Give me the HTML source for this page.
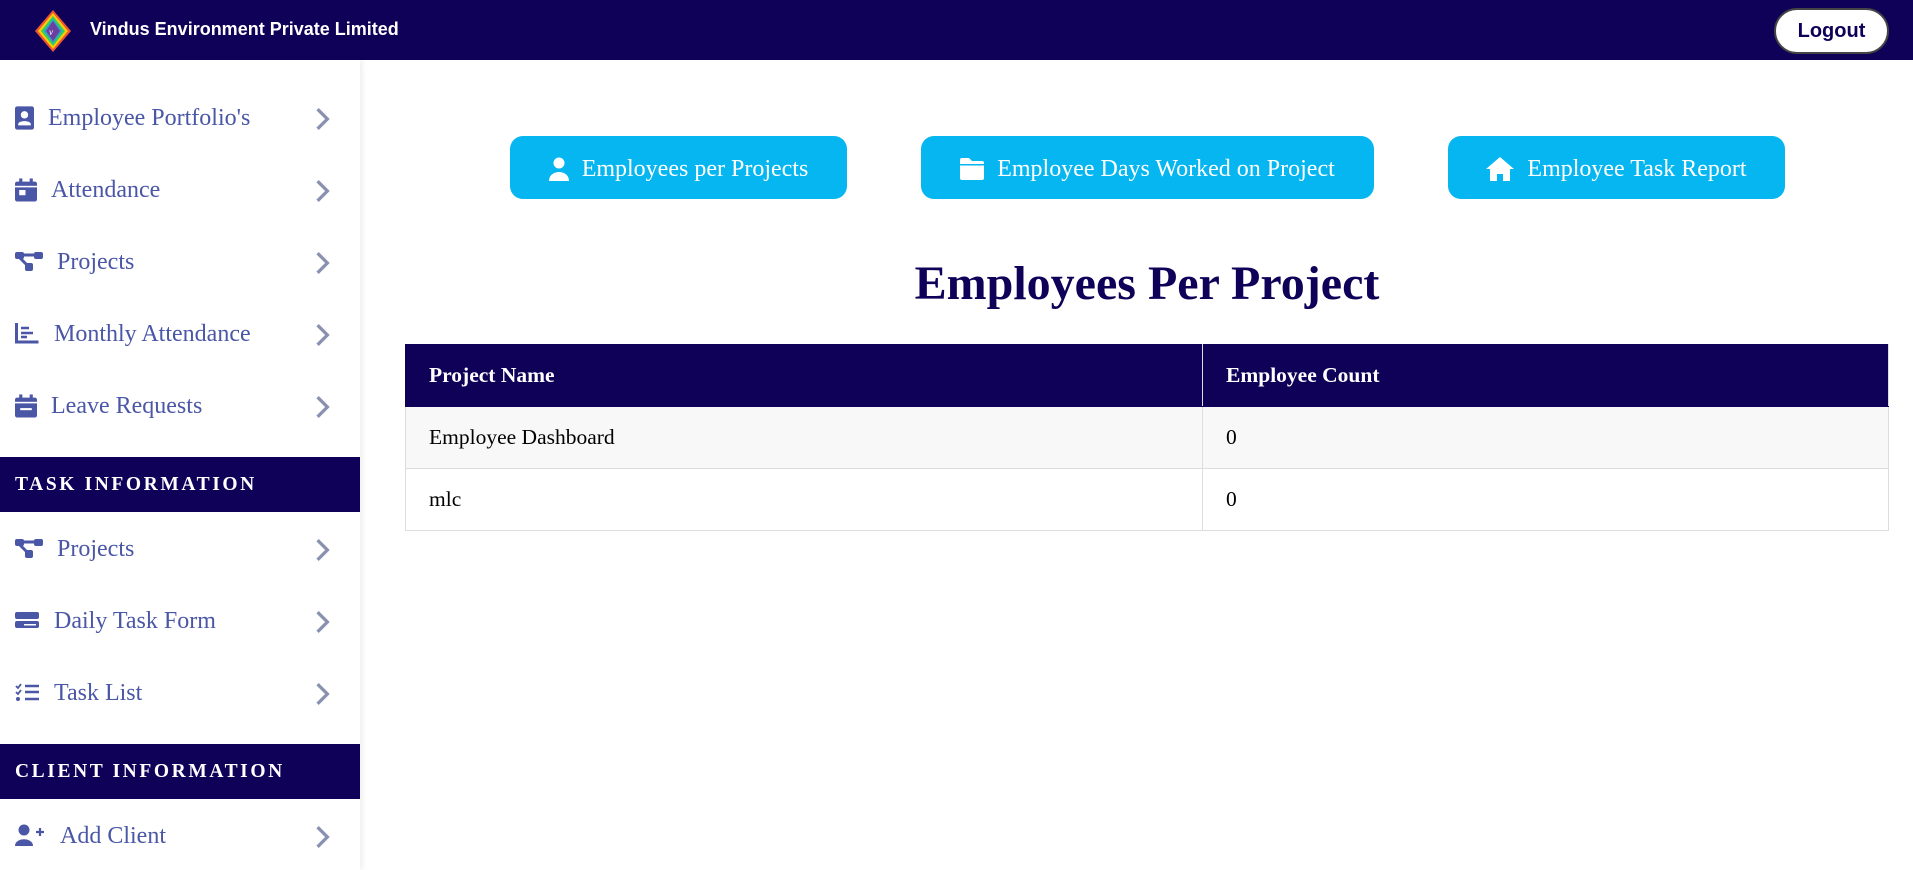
<!DOCTYPE html>
<html><head><meta charset="utf-8"><style>
*{margin:0;padding:0;box-sizing:border-box}
body{width:1913px;height:870px;overflow:hidden;background:#fff;font-family:"Liberation Serif",serif;position:relative}
.hdr{position:absolute;left:0;top:0;width:1913px;height:60px;background:#0f0058}
.brand{position:absolute;left:90px;top:19px;color:#fff;font:bold 18px "Liberation Sans",sans-serif}
.logout{position:absolute;left:1774px;top:8px;width:115px;height:46px;border-radius:23px;background:#fff;border:2px solid #444;color:#0f0058;font:bold 20px "Liberation Sans",sans-serif;text-align:center;line-height:42px}
.side{position:absolute;left:0;top:60px;width:360px;height:810px;background:#fff;box-shadow:2px 0 6px rgba(0,0,0,.08)}
.item{position:absolute;left:0;width:360px;height:40px;color:#4a56a6;font-size:24px}
.item svg.ic{position:absolute;left:15px;top:8px}
.item span{position:absolute;top:7px}
.item .chev{position:absolute;left:315px;top:9px}
.sec{position:absolute;left:0;width:360px;height:55px;background:#0f0058;color:#fff;font-weight:bold;font-size:19.5px;letter-spacing:2.6px;padding-left:15px;line-height:55px}
.btn{position:absolute;top:136px;height:63px;padding-top:3px;background:#06b6f0;border-radius:13px;color:#fff;font-size:24px;display:flex;align-items:center;justify-content:center;gap:13px}
h1{position:absolute;left:405px;width:1484px;top:256px;text-align:center;color:#0f0058;font-size:48px;font-weight:bold}
table{position:absolute;left:405px;top:344px;width:1484px;border-collapse:collapse;font-size:21.5px}
td,th{border:1px solid #ddd;text-align:left;padding-left:23px;height:62px}
th{background:#0f0058;color:#fff;border-color:#0f0058;border-right-color:#ddd}
tr.a td{background:#f8f8f8}
</style></head><body>
<div class="hdr">
<svg style="position:absolute;left:34px;top:9px" width="38" height="44" viewBox="0 0 38 44">
<polygon points="19,1 37,22 19,43 1,22" fill="#e53"/>
<polygon points="19,4 34,22 19,40 4,22" fill="#fc0"/>
<polygon points="19,7 31,22 19,37 7,22" fill="#3c6"/>
<polygon points="19,10 28,22 19,34 10,22" fill="#39c"/>
<polygon points="19,12 26,22 19,32 12,22" fill="#6a3fa0"/>
<text x="15" y="26" font-size="9" fill="#fff" font-style="italic">v</text>
</svg>
<div class="brand">Vindus Environment Private Limited</div>
<div class="logout">Logout</div>
</div>
<div class="side">
<div class="item" style="top:38px"><svg class="ic" width="19" height="24" viewBox="0 0 18 22"><rect x="0" y="0" width="18" height="22" rx="2" fill="#4a56a6"/><circle cx="9" cy="8" r="3.5" fill="#fff"/><path d="M3 17c0-4 12-4 12 0v1H3z" fill="#fff"/></svg><span style="left:48px">Employee Portfolio's</span><svg class="chev" width="16" height="24" viewBox="0 0 14 22"><path d="M2 2l9 9-9 9" stroke="#8a90b0" stroke-width="3" fill="none"/></svg></div>
<div class="item" style="top:110px"><svg class="ic" width="22" height="24" viewBox="0 0 21 22"><rect x="4" y="0" width="3" height="5" fill="#4a56a6"/><rect x="14" y="0" width="3" height="5" fill="#4a56a6"/><rect x="0" y="3" width="21" height="19" rx="2" fill="#4a56a6"/><rect x="0" y="7" width="21" height="1.5" fill="#fff"/><rect x="4" y="11" width="6" height="5" fill="#fff"/></svg><span style="left:51px">Attendance</span><svg class="chev" width="16" height="24" viewBox="0 0 14 22"><path d="M2 2l9 9-9 9" stroke="#8a90b0" stroke-width="3" fill="none"/></svg></div>
<div class="item" style="top:182px"><svg class="ic" width="28" height="22" viewBox="0 0 28 22"><rect x="0" y="2" width="9" height="7" rx="2" fill="#4a56a6"/><rect x="19" y="2" width="9" height="7" rx="2" fill="#4a56a6"/><rect x="10" y="13" width="8" height="8" rx="2" fill="#4a56a6"/><path d="M8 5h12M5 8l9 9" stroke="#4a56a6" stroke-width="3"/></svg><span style="left:57px">Projects</span><svg class="chev" width="16" height="24" viewBox="0 0 14 22"><path d="M2 2l9 9-9 9" stroke="#8a90b0" stroke-width="3" fill="none"/></svg></div>
<div class="item" style="top:254px"><svg class="ic" width="24" height="22" viewBox="0 0 24 22"><path d="M1.5 1v19h22" stroke="#4a56a6" stroke-width="3" fill="none"/><path d="M6 6h8M6 11h12M6 15h6" stroke="#4a56a6" stroke-width="2.5"/></svg><span style="left:54px">Monthly Attendance</span><svg class="chev" width="16" height="24" viewBox="0 0 14 22"><path d="M2 2l9 9-9 9" stroke="#8a90b0" stroke-width="3" fill="none"/></svg></div>
<div class="item" style="top:326px"><svg class="ic" width="22" height="24" viewBox="0 0 21 22"><rect x="4" y="0" width="3" height="5" fill="#4a56a6"/><rect x="14" y="0" width="3" height="5" fill="#4a56a6"/><rect x="0" y="3" width="21" height="19" rx="2" fill="#4a56a6"/><rect x="0" y="7" width="21" height="1.5" fill="#fff"/><rect x="5" y="13" width="11" height="2" fill="#fff"/></svg><span style="left:51px">Leave Requests</span><svg class="chev" width="16" height="24" viewBox="0 0 14 22"><path d="M2 2l9 9-9 9" stroke="#8a90b0" stroke-width="3" fill="none"/></svg></div>
<div class="sec" style="top:397px">TASK INFORMATION</div>
<div class="item" style="top:469px"><svg class="ic" width="28" height="22" viewBox="0 0 28 22"><rect x="0" y="2" width="9" height="7" rx="2" fill="#4a56a6"/><rect x="19" y="2" width="9" height="7" rx="2" fill="#4a56a6"/><rect x="10" y="13" width="8" height="8" rx="2" fill="#4a56a6"/><path d="M8 5h12M5 8l9 9" stroke="#4a56a6" stroke-width="3"/></svg><span style="left:57px">Projects</span><svg class="chev" width="16" height="24" viewBox="0 0 14 22"><path d="M2 2l9 9-9 9" stroke="#8a90b0" stroke-width="3" fill="none"/></svg></div>
<div class="item" style="top:541px"><svg class="ic" width="24" height="22" viewBox="0 0 24 22"><rect x="0" y="3" width="24" height="7" rx="2" fill="#4a56a6"/><rect x="0" y="12" width="24" height="7" rx="2" fill="#4a56a6"/><rect x="9" y="15" width="12" height="1.5" fill="#fff"/></svg><span style="left:54px">Daily Task Form</span><svg class="chev" width="16" height="24" viewBox="0 0 14 22"><path d="M2 2l9 9-9 9" stroke="#8a90b0" stroke-width="3" fill="none"/></svg></div>
<div class="item" style="top:613px"><svg class="ic" width="24" height="22" viewBox="0 0 24 22"><path d="M1 5l2 2 3-4M1 11l2 2 3-4" stroke="#4a56a6" stroke-width="1.8" fill="none"/><circle cx="3" cy="18" r="2" fill="#4a56a6"/><path d="M10 5h14M10 11h14M10 18h14" stroke="#4a56a6" stroke-width="2.5"/></svg><span style="left:54px">Task List</span><svg class="chev" width="16" height="24" viewBox="0 0 14 22"><path d="M2 2l9 9-9 9" stroke="#8a90b0" stroke-width="3" fill="none"/></svg></div>
<div class="sec" style="top:684px">CLIENT INFORMATION</div>
<div class="item" style="top:756px"><svg class="ic" width="30" height="22" viewBox="0 0 30 22"><circle cx="9" cy="6" r="5.5" fill="#4a56a6"/><path d="M0 22c0-9 18-9 18 0z" fill="#4a56a6"/><path d="M21 8h8M25 4v8" stroke="#4a56a6" stroke-width="2.2"/></svg><span style="left:60px">Add Client</span><svg class="chev" width="16" height="24" viewBox="0 0 14 22"><path d="M2 2l9 9-9 9" stroke="#8a90b0" stroke-width="3" fill="none"/></svg></div>
</div>
<div class="btn" style="left:510px;width:337px"><svg width="20" height="24" viewBox="0 0 20 24"><circle cx="10" cy="6" r="5.5" fill="#fff"/><path d="M0 24c0-12 20-12 20 0z" fill="#fff"/></svg>Employees per Projects</div>
<div class="btn" style="left:921px;width:453px"><svg width="24" height="22" viewBox="0 0 24 22"><path d="M0 2a2 2 0 0 1 2-2h7l3 3h10a2 2 0 0 1 2 2v15a2 2 0 0 1-2 2H2a2 2 0 0 1-2-2z" fill="#fff"/><rect x="0" y="6" width="24" height="1.5" fill="#06b6f0"/></svg>Employee Days Worked on Project</div>
<div class="btn" style="left:1448px;width:337px"><svg width="28" height="24" viewBox="0 0 28 24"><path d="M14 0l14 12h-4v12h-7v-7h-6v7H4V12H0z" fill="#fff"/></svg>Employee Task Report</div>
<h1>Employees Per Project</h1>
<table>
<tr><th style="width:797px">Project Name</th><th>Employee Count</th></tr>
<tr class="a"><td>Employee Dashboard</td><td>0</td></tr>
<tr><td>mlc</td><td>0</td></tr>
</table>
</body></html>
